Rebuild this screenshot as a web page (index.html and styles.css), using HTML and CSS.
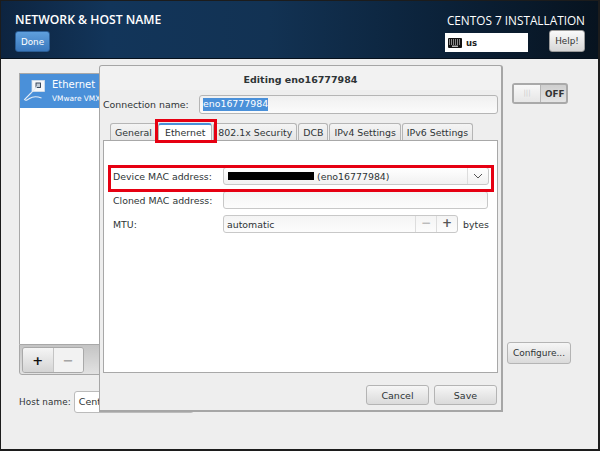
FILE: index.html
```html
<!DOCTYPE html>
<html lang="en">
<head>
<meta charset="utf-8">
<title>Network &amp; Host Name</title>
<link rel="stylesheet" href="styles.css">
</head>
<body>
<div class="screen">
  <header class="topbar">
    <div class="top-left">
      <div class="spoke-title">NETWORK &amp; HOST NAME</div>
      <button class="done">Done</button>
    </div>
    <div class="top-right">
      <div class="product">CENTOS 7 INSTALLATION</div>
      <div class="top-controls">
        <div class="layout">
          <svg class="kbd" width="14" height="10" viewBox="0 0 14 10"><rect width="14" height="10" rx="1" fill="#111"/><path d="M1 2h12M1 4h12M1 6h12" stroke="#fff" stroke-width="1" stroke-dasharray="1 1" fill="none"/><path d="M4 8.2h6" stroke="#fff" stroke-width="1" fill="none"/></svg>
          <span>us</span>
        </div>
        <button class="help">Help!</button>
      </div>
    </div>
  </header>
  <main class="spoke">
    <section class="left-col">
      <div class="device-list">
        <div class="device-row">
          <svg class="eth-icon" width="24" height="24" viewBox="0 0 24 24"><rect x="9" y="1.5" width="12.5" height="11" fill="#f7f8fa" stroke="#d5dfe9" stroke-width=".8"/><rect x="13" y="4" width="4.5" height="4.5" fill="#c3ccd6" stroke="#2a3b50" stroke-width=".9"/><path d="M14 7.5 8 14 1.5 20.5c1 1.5 3 .5 5-1 3-2 8-2 12-.5" fill="none" stroke="#e3ecf6" stroke-width="1.1"/></svg>
          <div class="device-text">
            <div class="device-name">Ethernet</div>
            <div class="device-sub">VMware VMX</div>
          </div>
        </div>
      </div>
      <div class="list-tools">
        <div class="tool-group">
          <span class="tool add">+</span>
          <span class="tool remove">−</span>
        </div>
      </div>
      <div class="host-row">
        <label class="host-label">Host name:</label>
        <div class="host-input">Cent</div>
      </div>
    </section>
    <section class="right-col">
      <div class="toggle"><span class="thumb">|||</span><span class="toggle-text">OFF</span></div>
      <button class="btn configure">Configure...</button>
    </section>
  </main>

  <div class="dialog">
    <div class="dialog-title">Editing eno16777984</div>
    <div class="conn-row">
      <label class="form-label">Connection name:</label>
      <div class="conn-input"><span class="selected">eno16777984</span></div>
    </div>
    <div class="tabs">
      <span class="tab">General</span>
      <span class="tab active">Ethernet</span>
      <span class="tab">802.1x Security</span>
      <span class="tab">DCB</span>
      <span class="tab">IPv4 Settings</span>
      <span class="tab">IPv6 Settings</span>
    </div>
    <div class="notebook">
      <div class="form-row">
        <label class="row-label">Device MAC address:</label>
        <div class="combo">
          <span class="mask"></span>
          <span class="combo-text">(eno16777984)</span>
          <span class="combo-arrow"><svg width="10" height="6" viewBox="0 0 10 6"><path d="M1 1l4 4 4-4" fill="none" stroke="#555" stroke-width="1"/></svg></span>
        </div>
      </div>
      <div class="form-row">
        <label class="row-label">Cloned MAC address:</label>
        <div class="entry"></div>
      </div>
      <div class="form-row">
        <label class="row-label">MTU:</label>
        <div class="spin">
          <span class="spin-text">automatic</span>
          <span class="spin-btn dim">−</span>
          <span class="spin-btn">+</span>
        </div>
        <span class="unit">bytes</span>
      </div>
    </div>
    <div class="dialog-actions">
      <button class="btn action">Cancel</button>
      <button class="btn action">Save</button>
    </div>
    <div class="callout callout-tab"></div>
    <div class="callout callout-row"></div>
  </div>
</div>
</body>
</html>
```
FILE: styles.css
```css
* { box-sizing: border-box; }
html, body { margin: 0; padding: 0; }
body { width: 600px; height: 451px; overflow: hidden; font-family: "DejaVu Sans", sans-serif; font-size: 9.4px; color: #2e3436; }
button { font-family: inherit; margin: 0; }

.screen { position: relative; width: 600px; height: 451px; border: 1px solid #1c1c1c; border-width: 1px 2px 2px 1px; background: #eeeeee; display: flex; flex-direction: column; overflow: hidden; }

.topbar { height: 58px; flex: none; display: flex; justify-content: space-between; padding: 9px 13px 0 14px; background: linear-gradient(90deg, #0d2440 0%, #12355a 18%, #123253 45%, #0b2138 75%, #07131f 100%); border-bottom: 1px solid #05101c; color: #fff; }
.spoke-title { font-family: "Open Sans", sans-serif; font-size: 12.2px; font-weight: 600; line-height: 19px; white-space: nowrap; }
.done { display: block; width: 35px; height: 21px; margin-top: 2px; padding: 0; background: linear-gradient(#5f9fdc, #3a78bd); border: 1px solid #2a5d95; border-radius: 3px; color: #fff; font-size: 8.8px; }
.top-right { display: flex; flex-direction: column; align-items: flex-end; }
.product { font-family: "Open Sans", sans-serif; font-size: 11.8px; line-height: 20px; white-space: nowrap; }
.top-controls { display: flex; align-items: flex-start; gap: 21px; }
.layout { width: 83px; height: 19px; margin-top: 3px; background: #fff; color: #222; display: flex; align-items: center; gap: 4px; padding-left: 3px; font-weight: 700; font-size: 8.5px; }
.help { width: 36px; height: 22px; padding: 0; background: linear-gradient(#fafafa, #d6d6d6); border: 1px solid #9a9a9a; border-radius: 3px; color: #333; font-size: 8.8px; }

.spoke { flex: 1; display: flex; padding: 14px 0 0 18px; }
.left-col { width: 398px; }
.device-list { width: 290px; height: 271px; background: #fff; border: 1px solid #a8a8a8; border-bottom: 0; }
.device-row { height: 34px; background: #4a90d9; color: #fff; display: flex; align-items: center; padding-left: 3px; gap: 5px; }
.eth-icon { flex: none; }
.device-name { font-size: 10px; line-height: 13px; }
.device-sub { font-size: 7.4px; line-height: 11px; margin-top: 2px; white-space: nowrap; }
.list-tools { width: 290px; height: 31px; background: linear-gradient(#c4c4c4, #e2e2e2); border: 1px solid #a8a8a8; border-radius: 0 0 3px 3px; padding: 2px 2px; }
.tool-group { display: flex; width: 62px; height: 26px; border: 1px solid #a9a9a9; border-radius: 3px; overflow: hidden; }
.tool { flex: 1; display: flex; align-items: center; justify-content: center; font-size: 13px; font-weight: 700; }
.add { background: linear-gradient(#f5f5f5, #d4d4d4); color: #111; border-right: 1px solid #c4c4c4; }
.remove { background: #f2f2f2; color: #a5a5a5; }
.host-row { display: flex; align-items: center; gap: 3px; margin-top: 16px; }
.host-label { font-size: 8.8px; letter-spacing: .1px; }
.host-input { width: 120px; height: 22px; border: 1px solid #bbb; border-radius: 3px; background: #fff; padding: 4px 4px; font-size: 9.5px; }

.right-col { flex: 1; position: relative; }
.toggle { display: flex; align-items: center; width: 56px; height: 21px; margin: 10px 0 0 95px; background: linear-gradient(#cfcfcf, #e4e4e4); border: 2px solid #a9a9a9; border-radius: 3px; }
.thumb { width: 27px; height: 17px; background: linear-gradient(#f8f8f8, #e6e6e6); color: #ccc; font-size: 7px; text-align: center; line-height: 16px; border-right: 1px solid #b5b5b5; }
.toggle-text { font-weight: 700; font-size: 8.8px; color: #333; padding-left: 4px; }
.configure { display: block; width: 64px; height: 22px; margin: 238px 0 0 90px; font-size: 9px; }

.btn { padding: 0; background: linear-gradient(#f6f6f6, #dadada); border: 1px solid #b4b4b4; border-radius: 3px; color: #2e3436; }

.dialog { position: absolute; left: 98px; top: 64px; width: 404px; height: 347px; background: #eeeeee; border: 1px solid #a6a6a6; border-right-width: 2px; border-bottom-width: 2px; border-radius: 3px 3px 0 0; padding: 0 3px 0 3px; display: flex; flex-direction: column; }
.dialog-title { font-weight: 700; text-align: center; font-size: 9.5px; line-height: 12px; padding-top: 8px; height: 24px; background: #f2f2f2; margin: 0 -3px; border-radius: 3px 3px 0 0; }
.conn-row { display: flex; align-items: center; height: 19px; margin-top: 5px; justify-content: space-between; }
.form-label { white-space: nowrap; }
.conn-input { width: 299px; height: 19px; border: 1px solid #b5b5b5; border-radius: 3px; background: linear-gradient(#f0f0f0, #fbfbfb); padding: 2px 3px; line-height: 12px; }
.selected { background: #4a90d9; color: #fff; display: inline-block; line-height: 12px; height: 13px; }

.tabs { display: flex; height: 17px; margin-top: 9px; padding-left: 7px; position: relative; z-index: 1; }
.tab { height: 17px; padding: 2px 4px 0; margin-right: 1px; background: linear-gradient(#f4f4f4, #e6e6e6); border: 1px solid #b5b5b5; border-bottom: 0; border-radius: 3px 3px 0 0; white-space: nowrap; line-height: 13px; }
.tab.active { background: #fff; border-color: #4a90d9 #b5b5b5 #fff; border-top-width: 2px; height: 18px; padding: 1px 6px 0; }
.notebook { width: 395px; height: 233px; background: #fff; border: 1px solid #a8a8a8; padding: 26px 4px 0 9px; }
.form-row { display: flex; align-items: center; height: 18px; margin-bottom: 6px; }
.row-label { width: 110px; flex: none; white-space: nowrap; }
.combo { width: 266px; height: 18px; border: 1px solid #c8c8c8; border-radius: 3px; background: linear-gradient(#fff, #f1f1f1); display: flex; align-items: center; padding-left: 4px; }
.mask { width: 86px; height: 8px; background: #000; flex: none; }
.combo-text { flex: 1; padding-left: 3px; }
.combo-arrow { width: 21px; height: 16px; border-left: 1px solid #ddd; display: flex; align-items: center; justify-content: center; }
.entry { width: 265px; height: 18px; border: 1px solid #c8c8c8; border-radius: 3px; background: linear-gradient(#f4f4f4, #fcfcfc); }
.spin { width: 235px; height: 18px; border: 1px solid #c8c8c8; border-radius: 3px; background: linear-gradient(#f4f4f4, #fcfcfc); display: flex; align-items: center; }
.spin-text { flex: 1; padding-left: 3px; }
.spin-btn { width: 21px; height: 16px; border-left: 1px solid #ddd; text-align: center; font-size: 12px; line-height: 15px; font-weight: 700; color: #555; }
.spin-btn.dim { color: #bbb; }
.unit { padding-left: 5px; }

.dialog-actions { display: flex; justify-content: flex-end; gap: 5px; margin-top: 12px; padding-right: 1px; }
.action { width: 63px; height: 20px; font-size: 9.5px; }

.callout { position: absolute; border: 3px solid #e60012; pointer-events: none; z-index: 2; }
.callout-tab { left: 55px; top: 53px; width: 62px; height: 24px; }
.callout-row { left: 8px; top: 99px; width: 386px; height: 27px; }
```
